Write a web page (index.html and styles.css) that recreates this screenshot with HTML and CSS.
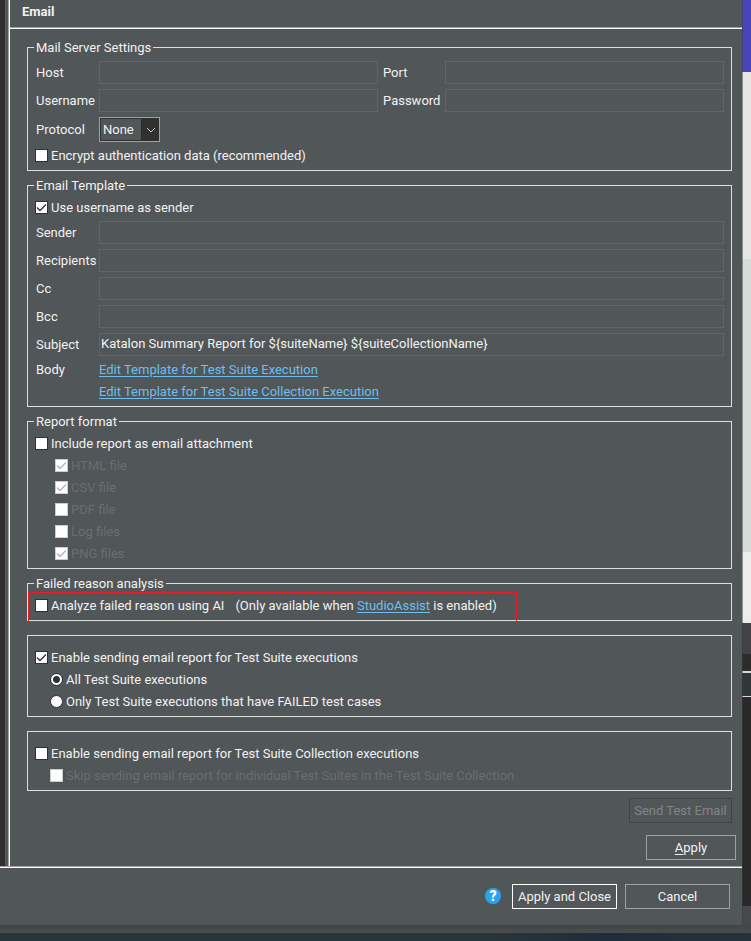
FILE: index.html
```html
<!DOCTYPE html>
<html lang="en">
<head>
<meta charset="utf-8">
<title>Email</title>
<link rel="stylesheet" href="styles.css">
</head>
<body>
<div class="window">
  <main class="dialog">
    <div class="page-row">
      <div class="tree-edge"></div>
      <section class="page">
        <header class="page-header"><h1>Email</h1></header>
        <form class="groups">
          <fieldset class="group">
            <legend>Mail Server Settings</legend>
            <div class="fields fields-pair">
              <label for="host">Host</label><input type="text" id="host">
              <label for="port">Port</label><input type="text" id="port">
              <label for="username">Username</label><input type="text" id="username">
              <label for="password">Password</label><input type="password" id="password">
              <label for="protocol">Protocol</label>
              <div class="combo">
                <select id="protocol"><option>None</option><option>SSL</option><option>TLS</option></select>
                <svg class="combo-arrow" viewBox="0 0 10 6" width="10" height="6" aria-hidden="true"><path d="M1 1l4 4 4-4" fill="none" stroke="#c8c8c8" stroke-width="1"/></svg>
              </div>
            </div>
            <label class="option"><input type="checkbox">Encrypt authentication data (recommended)</label>
          </fieldset>

          <fieldset class="group">
            <legend>Email Template</legend>
            <label class="option"><input type="checkbox" checked>Use username as sender</label>
            <div class="fields">
              <label for="sender">Sender</label><input type="text" id="sender">
              <label for="recipients">Recipients</label><input type="text" id="recipients">
              <label for="cc">Cc</label><input type="text" id="cc">
              <label for="bcc">Bcc</label><input type="text" id="bcc">
              <label for="subject">Subject</label><input type="text" id="subject" value="Katalon Summary Report for ${suiteName} ${suiteCollectionName}">
            </div>
            <div class="body-row">
              <span>Body</span>
              <div class="links">
                <a href="#suite">Edit Template for Test Suite Execution</a>
                <a href="#collection">Edit Template for Test Suite Collection Execution</a>
              </div>
            </div>
          </fieldset>

          <fieldset class="group">
            <legend>Report format</legend>
            <label class="option"><input type="checkbox">Include report as email attachment</label>
            <div class="formats">
              <label class="option"><input type="checkbox" checked disabled>HTML file</label>
              <label class="option"><input type="checkbox" checked disabled>CSV file</label>
              <label class="option"><input type="checkbox" disabled>PDF file</label>
              <label class="option"><input type="checkbox" disabled>Log files</label>
              <label class="option"><input type="checkbox" checked disabled>PNG files</label>
            </div>
          </fieldset>

          <fieldset class="group">
            <legend>Failed reason analysis</legend>
            <div class="analysis">
              <label class="option"><input type="checkbox">Analyze failed reason using AI</label>
              <span>(Only available when <a href="#assist">StudioAssist</a> is enabled)</span>
            </div>
          </fieldset>

          <fieldset class="group plain">
            <label class="option"><input type="checkbox" checked>Enable sending email report for Test Suite executions</label>
            <div class="nested">
              <label class="option"><input type="radio" name="scope" checked>All Test Suite executions</label>
              <label class="option"><input type="radio" name="scope">Only Test Suite executions that have FAILED test cases</label>
            </div>
          </fieldset>

          <fieldset class="group plain">
            <label class="option"><input type="checkbox">Enable sending email report for Test Suite Collection executions</label>
            <div class="nested">
              <label class="option"><input type="checkbox" disabled>Skip sending email report for individual Test Suites in the Test Suite Collection</label>
            </div>
          </fieldset>
          <button type="button" class="button send" disabled>Send Test Email</button>
        </form>
        <div class="apply-row"><button type="button" class="button apply"><u>A</u>pply</button></div>
      </section>
    </div>
    <footer class="footer">
      <button type="button" class="help" aria-label="Help">?</button>
      <button type="button" class="button wide default">Apply and Close</button>
      <button type="button" class="button wide">Cancel</button>
    </footer>
  </main>
  <div class="backdrop">
    <div class="blue"></div><div class="light"></div><div class="mint"></div><div class="white"></div>
    <div class="slate"></div><div class="dark"></div><div class="tab"></div><div class="panel"></div><div class="status"></div>
  </div>
</div>
<div class="dialog-shadow"></div>
<div class="desktop"></div>
</body>
</html>
```
FILE: styles.css
```css
* { box-sizing: border-box; }

body {
  margin: 0;
  min-height: 100vh;
  display: flex;
  flex-direction: column;
  background: #515658;
  color: #f2f2f2;
  font: 13px/22px Roboto, sans-serif;
}

a { color: #6cbfee; text-underline-offset: 2px; }
u { text-underline-offset: 2px; }
input, select, button { font: inherit; color: inherit; margin: 0; }

.window { flex: 1; display: flex; }
.dialog { flex: 1; min-width: 0; display: flex; flex-direction: column; }
.page-row { flex: 1; display: flex; }
.tree-edge { width: 8px; background: #515658; border-left: 5px solid #2f2f2f; }

.page {
  flex: 1;
  min-width: 0;
  display: flex;
  flex-direction: column;
  border-left: 1px solid #a09f9c;
  box-shadow: inset 1px 0 #fff;
  padding-left: 1px;
}
.page-header {
  height: 29px;
  padding-left: 12px;
  border-bottom: 1px solid #fff;
  box-shadow: inset 0 -1px #a09f9c;
}
h1 { margin: 0; font-size: 13px; line-height: 24px; }

.groups {
  display: flex;
  flex-direction: column;
  gap: 4px;
  padding: 8px 10px 0 17px;
}
.group {
  margin: 0;
  min-width: 0;
  padding: 1px 7px 3px;
  border: 1px solid #dcdddd;
}
.group.plain { margin-top: 10px; padding-top: 11px; }
legend { padding: 0 2px; margin-left: -1px; line-height: 21px; }

.fields {
  display: grid;
  grid-template-columns: 59px 1fr;
  gap: 5px;
  margin: 2px 0 3px;
}
.fields-pair { grid-template-columns: 59px 1fr 57px 1fr; }
.fields label { padding-left: 1px; align-self: center; white-space: nowrap; }
.fields-pair label:nth-of-type(even) { padding-left: 0; }
.fields input {
  width: 100%;
  min-width: 0;
  height: 23px;
  padding: 0 1px 3px;
  border: 1px solid #626465;
  background: transparent;
  outline: none;
}

.combo { position: relative; justify-self: start; }
.combo select {
  display: block;
  width: 61px;
  height: 25px;
  padding: 0 0 0 3px;
  appearance: none;
  border: 1px solid #a0a0a0;
  border-radius: 0;
  background: linear-gradient(90deg, #515658 41px, #303030 41px);
  box-shadow: inset 0 0 0 1px #303030;
}
.combo-arrow { position: absolute; right: 4px; top: 10px; pointer-events: none; }

.option { display: flex; align-items: center; gap: 3px; height: 22px; white-space: nowrap; }
.option:has(:disabled) { color: #6b6e6f; }
.option input {
  appearance: none;
  flex: none;
  width: 13px;
  height: 13px;
  margin-bottom: 1px;
  border: 1px solid #303030;
  background: #fff;
}
.option input[type="checkbox"]:checked {
  background: #fff url("data:image/svg+xml,%3Csvg xmlns='http://www.w3.org/2000/svg' viewBox='0 0 11 11'%3E%3Cpath d='M1 5.5l3 3L10 2.5' fill='none' stroke='%23303030' stroke-width='1.3'/%3E%3C/svg%3E") center / 11px;
}
.option input:disabled { border-color: #ccc; }
.option input[type="checkbox"]:checked:disabled {
  background-image: url("data:image/svg+xml,%3Csvg xmlns='http://www.w3.org/2000/svg' viewBox='0 0 11 11'%3E%3Cpath d='M1 5.5l3 3L10 2.5' fill='none' stroke='%23b4b4b4' stroke-width='1.3'/%3E%3C/svg%3E");
}
.option input[type="radio"] { border-radius: 50%; }
.option input[type="radio"]:checked { background: radial-gradient(circle, #303030 3px, #fff 4px); }
.formats { padding-left: 20px; }
.nested { padding-left: 15px; }

.body-row { display: grid; grid-template-columns: 59px 1fr; gap: 5px; }
.body-row span { padding-left: 1px; }
.links { display: flex; flex-direction: column; align-items: flex-start; }

.analysis { position: relative; display: flex; gap: 11px; white-space: nowrap; }
.analysis::after {
  content: "";
  position: absolute;
  top: -3px;
  bottom: -5px;
  left: -7px;
  width: 487px;
  border: 1px solid #ed1c24;
  pointer-events: none;
}

.button {
  height: 25px;
  padding: 0 3px;
  border: 1px solid #a0a0a0;
  border-radius: 0;
  background: transparent;
  line-height: 21px;
  white-space: nowrap;
}
.send { width: 103px; margin-top: 3px; align-self: flex-end; color: #818586; border-color: #404243; }
.apply-row { display: flex; justify-content: flex-end; padding: 12px 6px 6px; margin-top: auto; }
.apply { width: 90px; }

.footer {
  display: flex;
  justify-content: flex-end;
  align-items: center;
  gap: 8px;
  padding: 17px 12px 16px 0;
  border-top: 1px solid #a09f9c;
  box-shadow: inset 0 1px #fff;
}
.wide { width: 105px; }
.default { border-color: #fff; }
.help {
  width: 16px;
  height: 16px;
  margin-right: 3px;
  margin-bottom: 1px;
  padding: 0;
  border: 0;
  border-radius: 50%;
  background: #27a4ee;
  color: #fff;
  font-size: 14px;
  font-weight: 900;
  line-height: 16px;
}

.backdrop { width: 9px; display: flex; flex-direction: column; position: relative; }
.backdrop::before {
  content: "";
  position: absolute;
  inset: 0 auto 0 0;
  width: 1px;
  background: rgba(60, 60, 60, .5);
}
.blue { flex: 72; background: #4845b8; }
.light { flex: 187; background: #e6e6e6; }
.mint { flex: 293; background: #d5dcda; }
.white { flex: 71; background: #ededed; }
.slate { flex: 31; background: #404247; }
.dark { flex: 17; background: #2c2c2c; }
.tab { flex: 26; background: #30373a; box-shadow: inset 0 2px #d8d8d8, inset 0 -1px #d8d8d8; }
.panel { flex: 209; background: #292929; }
.status { flex: 19; background: #474a4b; }
.dialog-shadow { height: 8px; background: linear-gradient(#424546, #4a4d4e); }
.desktop { height: 8px; background: linear-gradient(90deg, #27363b, #27363b 65%, #202d3a 80%, #26323a); }
```
